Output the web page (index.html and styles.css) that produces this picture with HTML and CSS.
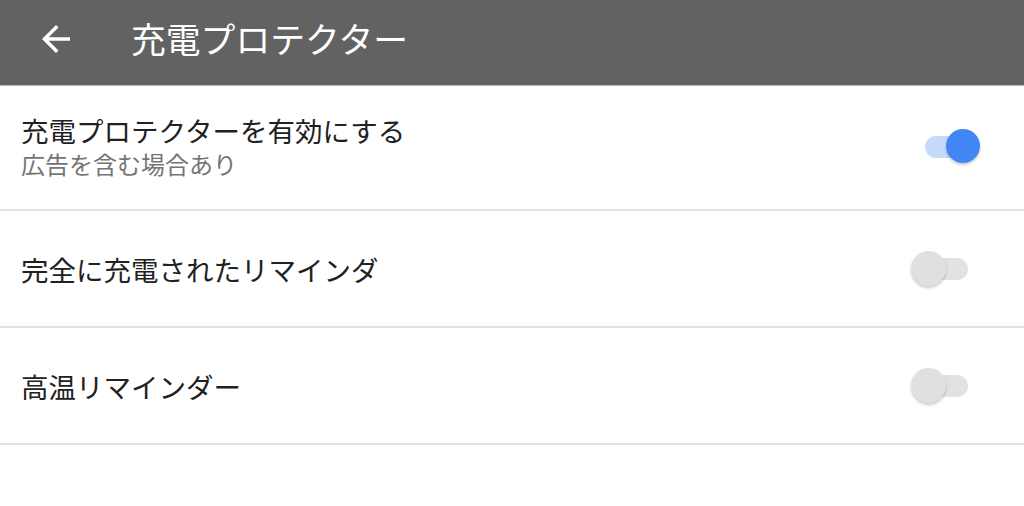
FILE: index.html
```html
<!DOCTYPE html>
<html lang="ja">
<head>
  <meta charset="UTF-8">
  <meta name="viewport" content="width=device-width, initial-scale=1.0">
  <title>充電プロテクター</title>
  <link rel="stylesheet" href="styles.css">
</head>
<body>
  <header class="toolbar">
    <button class="back-btn" aria-label="戻る">
      <svg viewBox="0 0 24 24" width="42" height="42">
        <path fill="#fff" d="M20 11H7.83l5.59-5.59L12 4l-8 8 8 8 1.41-1.41L7.83 13H20v-2z"/>
      </svg>
    </button>
    <h1 class="toolbar-title">充電プロテクター</h1>
  </header>

  <div class="settings">
    <div class="setting-row tall">
      <div class="setting-text">
        <div class="setting-title">充電プロテクターを有効にする</div>
        <div class="setting-sub">広告を含む場合あり</div>
      </div>
      <label class="switch">
        <input type="checkbox" checked>
        <span class="track"></span>
        <span class="thumb"></span>
      </label>
    </div>

    <div class="setting-row">
      <div class="setting-text">
        <div class="setting-title">完全に充電されたリマインダ</div>
      </div>
      <label class="switch">
        <input type="checkbox">
        <span class="track"></span>
        <span class="thumb"></span>
      </label>
    </div>

    <div class="setting-row">
      <div class="setting-text">
        <div class="setting-title">高温リマインダー</div>
      </div>
      <label class="switch">
        <input type="checkbox">
        <span class="track"></span>
        <span class="thumb"></span>
      </label>
    </div>
  </div>
</body>
</html>
```

FILE: styles.css
```css
body {
  margin: 0;
  font-family: 'Noto Sans CJK JP', 'Noto Sans', sans-serif;
  background: #fff;
  color: #212121;
}
.toolbar {
  display: flex;
  align-items: center;
  height: 77px;
  padding-bottom: 8px;
  background: #626262;
  box-shadow: 0 1px 1px rgba(0, 0, 0, 0.25);
  position: relative;
}
.back-btn {
  margin-left: 35px;
  width: 42px;
  height: 42px;
  padding: 0;
  border: none;
  background: none;
  display: flex;
}
.toolbar-title {
  margin: 0 0 0 54px;
  font-size: 34.8px;
  font-weight: normal;
  color: #fff;
  line-height: 1;
}
.setting-row {
  display: flex;
  align-items: center;
  justify-content: space-between;
  height: 115px;
  padding: 0 44px 0 21px;
  border-bottom: 2px solid #e3e3e3;
}
.setting-row.tall {
  height: 124px;
}
.setting-title {
  font-size: 27.5px;
  line-height: 34px;
}
.setting-sub {
  font-size: 24px;
  line-height: 34px;
  color: #757575;
}
.switch {
  position: relative;
  width: 69px;
  height: 36px;
  cursor: pointer;
}
.switch input {
  display: none;
}
.track {
  position: absolute;
  left: 14px;
  top: 7px;
  width: 43px;
  height: 22px;
  border-radius: 11px;
  background: #e2e2e2;
}
.thumb {
  position: absolute;
  left: 0;
  top: 0;
  width: 35px;
  height: 35px;
  border-radius: 50%;
  background: #e0e0e0;
  box-shadow: 0 2px 3px rgba(0, 0, 0, 0.2);
  transition: left 0.2s;
}
.switch input:checked ~ .track {
  background: #c6daf9;
}
.switch input:checked ~ .thumb {
  left: 35px;
  width: 34px;
  height: 34px;
  background: #4285f4;
}
```
